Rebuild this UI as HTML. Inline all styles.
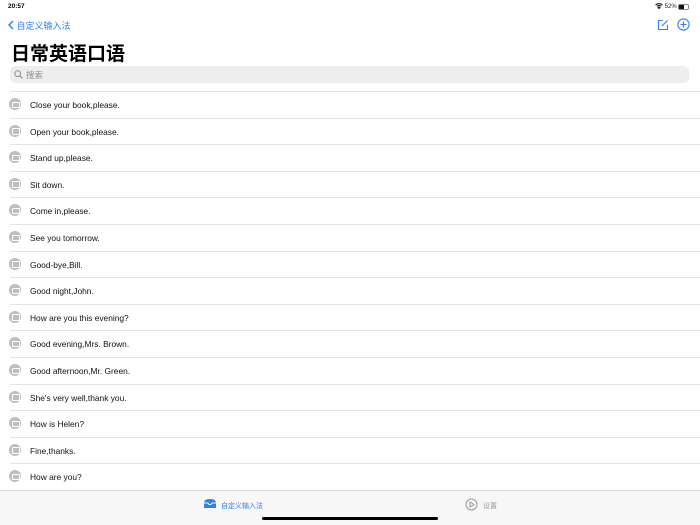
<!DOCTYPE html>
<html><head><meta charset="utf-8"><style>
*{margin:0;padding:0;box-sizing:border-box}
body{width:700px;height:525px;overflow:hidden;background:#fff;font-family:"Liberation Sans","Noto Sans CJK SC",sans-serif;position:relative;color:#000}
.abs{position:absolute}
.row{position:absolute;left:0;width:700px;height:26.6px}
.row .ic{position:absolute;left:9px;top:6px;width:12px;height:12px;border-radius:50%;background:#bdbdc2}
.row .ic:after{content:"";position:absolute;left:3px;top:3.5px;width:6px;height:4.5px;border:1px solid #fff;border-radius:1px}
.row .t{position:absolute;left:30px;top:8px;font-size:8.4px;line-height:10px;color:#111}
.row .sep{position:absolute;left:10px;right:0;bottom:0;height:1px;background:#e4e4e6}
</style></head><body>
<div class="abs" style="left:8px;top:3px;font-size:6.5px;font-weight:bold">20:57</div>
<div class="abs" style="left:655px;top:3px;font-size:6px;color:#222">
<svg width="8" height="6" viewBox="0 0 8 6" style="vertical-align:-1px"><path d="M0.5 2A5 5 0 0 1 7.5 2M1.8 3.3A3 3 0 0 1 6.2 3.3M4 5.5L3 4.5A1.4 1.4 0 0 1 5 4.5Z" stroke="#111" fill="none" stroke-width="1"/></svg> 52%</div>
<div class="abs" style="left:678px;top:4px;width:11px;height:6px;border:1px solid #888;border-radius:2px"><div style="width:5px;height:4px;background:#111"></div></div>
<div class="abs" style="left:8px;top:19px;font-size:9px;color:#2f80f5">
<svg width="6" height="10" viewBox="0 0 6 10" style="vertical-align:-1px"><path d="M5 1L1 5L5 9" stroke="#2f80f5" stroke-width="1.5" fill="none"/></svg> 自定义输入法</div>
<svg class="abs" style="left:657px;top:19px" width="12" height="12" viewBox="0 0 12 12"><path d="M6 1.5H1.5V10.5H10.5V6" stroke="#2f80f5" fill="none" stroke-width="1.1"/><path d="M5 7L10.5 1.5" stroke="#2f80f5" stroke-width="1.2"/></svg>
<svg class="abs" style="left:677px;top:18px" width="13" height="13" viewBox="0 0 13 13"><circle cx="6.5" cy="6.5" r="5.6" stroke="#2f80f5" fill="none" stroke-width="1.1"/><path d="M6.5 3.5V9.5M3.5 6.5H9.5" stroke="#2f80f5" stroke-width="1.1"/></svg>
<div class="abs" style="left:11px;top:39px;font-size:19px;font-weight:bold">日常英语口语</div>
<div class="abs" style="left:10px;top:66px;width:679px;height:17px;background:#eeeeef;border-radius:5px"></div>
<svg class="abs" style="left:14px;top:70px" width="9" height="9" viewBox="0 0 9 9"><circle cx="3.7" cy="3.7" r="2.9" stroke="#8e8e93" fill="none" stroke-width="1"/><path d="M5.8 5.8L8.5 8.5" stroke="#8e8e93" stroke-width="1.1"/></svg>
<div class="abs" style="left:26px;top:69px;font-size:8.5px;color:#8e8e93">搜索</div>
<div class="abs" style="left:10px;right:0;top:91px;height:1px;background:#e4e4e6"></div>
<div style="position:absolute;top:92px;left:0">
<div class="row" style="top:0"><div class="ic"></div><div class="t">Close your book,please.</div><div class="sep"></div></div>
<div class="row" style="top:26.6px"><div class="ic"></div><div class="t">Open your book,please.</div><div class="sep"></div></div>
<div class="row" style="top:53.2px"><div class="ic"></div><div class="t">Stand up,please.</div><div class="sep"></div></div>
<div class="row" style="top:79.8px"><div class="ic"></div><div class="t">Sit down.</div><div class="sep"></div></div>
<div class="row" style="top:106.4px"><div class="ic"></div><div class="t">Come in,please.</div><div class="sep"></div></div>
<div class="row" style="top:133px"><div class="ic"></div><div class="t">See you tomorrow.</div><div class="sep"></div></div>
<div class="row" style="top:159.6px"><div class="ic"></div><div class="t">Good-bye,Bill.</div><div class="sep"></div></div>
<div class="row" style="top:186.2px"><div class="ic"></div><div class="t">Good night,John.</div><div class="sep"></div></div>
<div class="row" style="top:212.8px"><div class="ic"></div><div class="t">How are you this evening?</div><div class="sep"></div></div>
<div class="row" style="top:239.4px"><div class="ic"></div><div class="t">Good evening,Mrs. Brown.</div><div class="sep"></div></div>
<div class="row" style="top:266px"><div class="ic"></div><div class="t">Good afternoon,Mr. Green.</div><div class="sep"></div></div>
<div class="row" style="top:292.6px"><div class="ic"></div><div class="t">She's very well,thank you.</div><div class="sep"></div></div>
<div class="row" style="top:319.2px"><div class="ic"></div><div class="t">How is Helen?</div><div class="sep"></div></div>
<div class="row" style="top:345.8px"><div class="ic"></div><div class="t">Fine,thanks.</div><div class="sep"></div></div>
<div class="row" style="top:372.4px"><div class="ic"></div><div class="t">How are you?</div></div>
</div>
<div class="abs" style="left:0;top:490px;width:700px;height:35px;background:#f7f7f7;border-top:1px solid #dcdcdc"></div>
<svg class="abs" style="left:203px;top:498px" width="14" height="11" viewBox="0 0 14 11"><path d="M1 5Q1 1 7 1Q13 1 13 5V10H1Z" fill="#2f80f5"/><path d="M1 5H5L6 6.5H8L9 5H13" stroke="#fff" fill="none" stroke-width="0.9"/></svg>
<div class="abs" style="left:221px;top:501px;font-size:7px;color:#2f80f5">自定义输入法</div>
<svg class="abs" style="left:465px;top:498px" width="13" height="13" viewBox="0 0 13 13"><circle cx="6.5" cy="6.5" r="5.5" stroke="#9a9a9e" fill="none" stroke-width="1"/><path d="M5 4L9 6.5L5 9Z" stroke="#9a9a9e" fill="none" stroke-width="1"/></svg>
<div class="abs" style="left:483px;top:501px;font-size:7px;color:#9a9a9e">设置</div>
<div class="abs" style="left:262px;top:517px;width:176px;height:3px;border-radius:2px;background:#000"></div>
</body></html>
